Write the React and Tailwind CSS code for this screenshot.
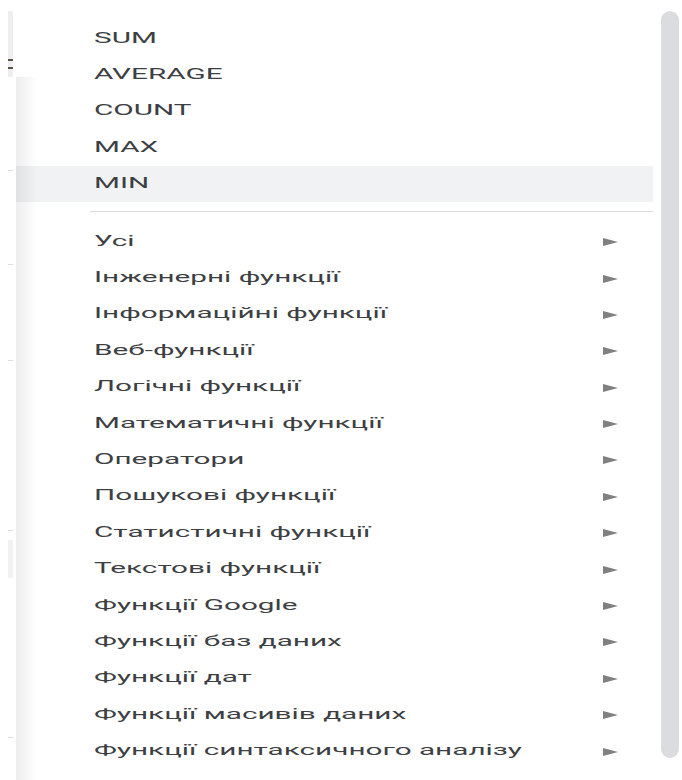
import React from "react";

const quick = ["SUM", "AVERAGE", "COUNT", "MAX", "MIN"];

const groups = [
  "Усі",
  "Інженерні функції",
  "Інформаційні функції",
  "Веб-функції",
  "Логічні функції",
  "Математичні функції",
  "Оператори",
  "Пошукові функції",
  "Статистичні функції",
  "Текстові функції",
  "Функції Google",
  "Функції баз даних",
  "Функції дат",
  "Функції масивів даних",
  "Функції синтаксичного аналізу",
];

function Label({ children }) {
  return (
    <span className="inline-block origin-left scale-x-[1.98] whitespace-nowrap text-[15px] leading-none text-[#3c4043]">
      {children}
    </span>
  );
}

function Arrow() {
  return (
    <svg width="15" height="8" viewBox="0 0 15 8" className="mt-[2px]">
      <polygon points="0,0 15,4 0,8" fill="#808080" />
    </svg>
  );
}

// strip of the sheet that peeks out behind the menu
function Gutter() {
  return (
    <div className="flex w-[16px] shrink-0 flex-col pl-2">
      <div className="mt-[11px] flex h-[66px] w-[5px] flex-col bg-[#eeeeee] pt-[48px]">
        <div className="h-[2px] w-[5px] bg-[#5a5148]" />
        <div className="mt-[6px] h-[2px] w-[5px] bg-[#5a5148]" />
      </div>
      <div className="mt-[93px] h-px w-[5px] bg-[#dddddd]" />
      <div className="mt-[93px] h-px w-[5px] bg-[#dddddd]" />
      <div className="mt-[95px] h-px w-[5px] bg-[#dddddd]" />
      <div className="mt-[169px] h-px w-[5px] bg-[#dddddd]" />
      <div className="mt-[9px] h-[38px] w-[5px] bg-[#f2f2f2]" />
      <div className="mt-[159px] h-px w-[5px] bg-[#dddddd]" />
    </div>
  );
}

export default function App() {
  return (
    <div className="flex h-[780px] w-[682px] overflow-hidden bg-white font-['Roboto',Arial,sans-serif]">
      <Gutter />

      <div className="relative flex w-[637px] shrink-0 flex-col pt-[20px]">
        {quick.map((name) => (
          <div
            key={name}
            className={
              "flex h-[36.4px] shrink-0 items-center pl-[78px] " +
              (name === "MIN" ? "bg-[#f1f2f4]" : "")
            }
          >
            <Label>{name}</Label>
          </div>
        ))}

        <div className="flex h-[21px] shrink-0 pl-[74px] pt-[9px]">
          <div className="h-px flex-1 bg-[#dadce0]" />
        </div>

        {groups.map((name) => (
          <div
            key={name}
            className="flex h-[36.4px] shrink-0 items-center justify-between pl-[78px] pr-[35px]"
          >
            <Label>{name}</Label>
            <Arrow />
          </div>
        ))}

        <div className="pointer-events-none absolute bottom-0 left-0 top-[77px] w-[22px] bg-gradient-to-r from-black/[0.07] to-transparent" />
      </div>

      <div className="ml-2 mt-[11px] h-[747px] w-[18px] shrink-0 rounded-full bg-[#dadce0]" />
    </div>
  );
}
